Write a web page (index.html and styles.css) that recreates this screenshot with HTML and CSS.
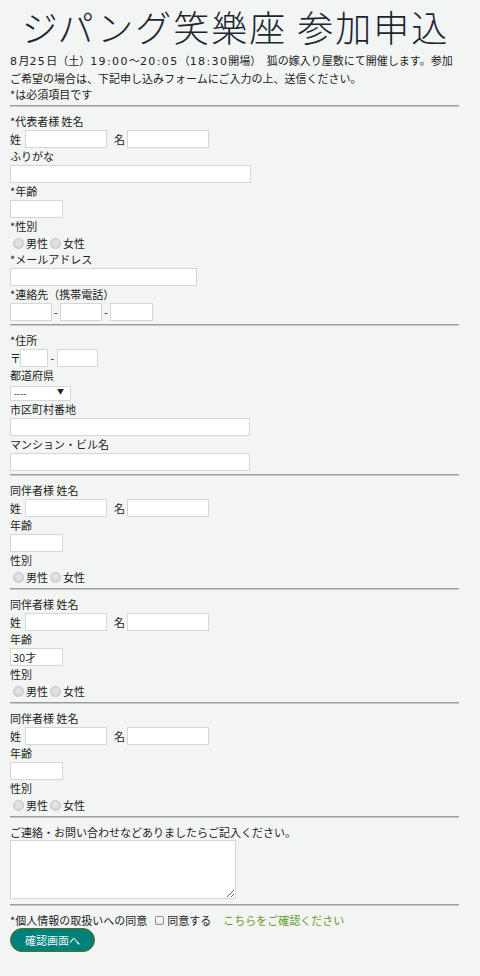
FILE: index.html
```html
<!DOCTYPE html>
<html lang="ja">
<head>
<meta charset="utf-8">
<title>ジパング笑樂座 参加申込</title>
<link rel="stylesheet" href="styles.css">
</head>
<body>
<div class="page">
  <h1 class="title">ジパング笑樂座 参加申込</h1>
  <p class="intro"><span class="num">8</span>月<span class="num">25</span>日（土）<span class="num">19:00</span>〜<span class="num">20:05</span>（<span class="num">18:30</span>開場）　狐の嫁入り屋敷にて開催します。参加<span>ご希望の場合は、下記申し込みフォームにご入力の上、送信ください。</span><br>*は必須項目です</p>
  <form class="form">
    <hr class="rule">
    <div class="group">
      <div class="label">*代表者様 姓名</div>
      <div class="row"><span class="pre">姓</span><input class="field w82" type="text"><span class="mid">名</span><input class="field w82" type="text"></div>
      <div class="label">ふりがな</div>
      <div class="row"><input class="field w241" type="text"></div>
      <div class="label">*年齢</div>
      <div class="row"><input class="field w53" type="text"></div>
      <div class="label">*性別</div>
      <div class="radios"><input class="radio" type="radio" name="g0"><span>男性</span><input class="radio" type="radio" name="g0"><span>女性</span></div>
      <div class="label">*メールアドレス</div>
      <div class="row"><input class="field w187" type="text"></div>
      <div class="label">*連絡先（携帯電話）</div>
      <div class="row"><input class="field w42" type="text"><span class="dash">-</span><input class="field w42" type="text"><span class="dash">-</span><input class="field w43" type="text"></div>
    </div>
    <hr class="rule">
    <div class="group">
      <div class="label">*住所</div>
      <div class="row"><span class="zipmark">〒</span><input class="field w28" type="text"><span class="dash zipdash">-</span><input class="field w41" type="text"></div>
      <div class="label">都道府県</div>
      <div class="row selrow"><span class="selwrap"><select class="pref"><option>----</option></select><span class="arrow">▼</span></span></div>
      <div class="label">市区町村番地</div>
      <div class="row"><input class="field w240" type="text"></div>
      <div class="label">マンション・ビル名</div>
      <div class="row"><input class="field w240" type="text"></div>
    </div>
    <hr class="rule">
    <div class="group">
      <div class="label">同伴者様 姓名</div>
      <div class="row"><span class="pre">姓</span><input class="field w82" type="text"><span class="mid">名</span><input class="field w82" type="text"></div>
      <div class="label">年齢</div>
      <div class="row"><input class="field w53" type="text"></div>
      <div class="label">性別</div>
      <div class="radios"><input class="radio" type="radio" name="g1"><span>男性</span><input class="radio" type="radio" name="g1"><span>女性</span></div>
    </div>
    <hr class="rule">
    <div class="group">
      <div class="label">同伴者様 姓名</div>
      <div class="row"><span class="pre">姓</span><input class="field w82" type="text"><span class="mid">名</span><input class="field w82" type="text"></div>
      <div class="label">年齢</div>
      <div class="row"><input class="field w53" type="text" value="30才"></div>
      <div class="label">性別</div>
      <div class="radios"><input class="radio" type="radio" name="g2"><span>男性</span><input class="radio" type="radio" name="g2"><span>女性</span></div>
    </div>
    <hr class="rule">
    <div class="group">
      <div class="label">同伴者様 姓名</div>
      <div class="row"><span class="pre">姓</span><input class="field w82" type="text"><span class="mid">名</span><input class="field w82" type="text"></div>
      <div class="label">年齢</div>
      <div class="row"><input class="field w53" type="text"></div>
      <div class="label">性別</div>
      <div class="radios"><input class="radio" type="radio" name="g3"><span>男性</span><input class="radio" type="radio" name="g3"><span>女性</span></div>
    </div>
    <hr class="rule">
    <div class="group">
      <div class="label label-tight">ご連絡・お問い合わせなどありましたらご記入ください。</div>
      <textarea class="memo"></textarea>
    </div>
    <hr class="rule">
    <div class="group">
      <div class="agree"><span>*個人情報の取扱いへの同意</span><input class="check" type="checkbox"><span>同意する</span><a class="link" href="#">こちらをご確認ください</a></div>
      <button class="submit" type="button">確認画面へ</button>
    </div>
  </form>
</div>
</body>
</html>
```
FILE: styles.css
```css
html, body {
  margin: 0;
  padding: 0;
  background: #f3f5f4;
}
body {
  font-family: "Noto Sans CJK JP", "Noto Sans", sans-serif;
  font-size: 11px;
  color: #222;
}
.page {
  width: 449px;
  margin-left: 10px;
  padding-bottom: 20px;
}
.title {
  margin: 0;
  padding-left: 2px;
  font-size: 36px;
  line-height: 52px;
  font-weight: 300;
  text-align: center;
  letter-spacing: 2px;
  color: #1b2631;
}
.intro {
  margin: 0;
  line-height: 16px;
}
.num {
  font-family: "DejaVu Sans", sans-serif;
  letter-spacing: 1.4px;
}
.rule {
  height: 0;
  margin: 3px 0 6px;
  border: 0;
  border-top: 1px solid #9c9c9c;
  border-bottom: 1px solid #c9c9c9;
}
.label {
  line-height: 17px;
  height: 17px;
}
.label-tight {
  line-height: 16px;
  height: 16px;
}
.row {
  display: flex;
  align-items: center;
  height: 18px;
}
.selrow {
  height: 17px;
  align-items: flex-start;
}
.field {
  box-sizing: border-box;
  height: 18px;
  margin: 0;
  padding: 0 2px;
  border: 1px solid #d6d6d6;
  border-radius: 0;
  background: #fff;
  font-family: inherit;
  font-size: 11px;
  color: #222;
}
.w82 { width: 82px; }
.w241 { width: 241px; }
.w240 { width: 240px; }
.w53 { width: 53px; }
.w187 { width: 187px; }
.w42 { width: 42px; }
.w43 { width: 43px; }
.w28 { width: 28px; }
.w41 { width: 41px; }
.pre { margin-right: 4px; }
.mid { margin: 0 2px 0 7px; }
.dash { width: 8px; text-align: center; }
.zipmark { width: 10px; }
.zipdash { width: 9px; }
.radios {
  display: flex;
  align-items: center;
  height: 16px;
}
.radio {
  appearance: none;
  -webkit-appearance: none;
  box-sizing: border-box;
  width: 11px;
  height: 11px;
  margin: 0 2px 0 3px;
  border: 1px solid #c4c4c4;
  border-radius: 50%;
  background: radial-gradient(circle at 50% 40%, #e8e8e8 0%, #d0d0d0 100%);
}
.radios span + .radio { margin-left: 2px; }
.selwrap {
  position: relative;
  display: inline-block;
}
.pref {
  appearance: none;
  -webkit-appearance: none;
  box-sizing: border-box;
  width: 61px;
  height: 15px;
  margin: 0;
  padding: 0 0 0 3px;
  border: 1px solid #d6d6d6;
  border-radius: 0;
  background: #fff;
  font-family: inherit;
  font-size: 9px;
  line-height: 13px;
  color: #222;
}
.arrow {
  position: absolute;
  right: 7px;
  top: 1px;
  font-size: 7px;
  line-height: 13px;
  color: #222;
  pointer-events: none;
}
.memo {
  display: block;
  box-sizing: border-box;
  width: 226px;
  height: 59px;
  margin: 0 0 5px;
  border: 1px solid #d6d6d6;
  background: #fff;
}
.agree {
  display: flex;
  align-items: center;
  height: 16px;
}
.check {
  appearance: none;
  -webkit-appearance: none;
  box-sizing: border-box;
  width: 9px;
  height: 9px;
  margin: 0 3px 0 8px;
  border: 1px solid #8c8c8c;
  border-radius: 2px;
  background: linear-gradient(#fff, #e8e8e8);
}
.link {
  margin-left: 12px;
  color: #6a9a2c;
  text-decoration: none;
}
.submit {
  display: block;
  box-sizing: border-box;
  width: 85px;
  height: 24px;
  margin: 0;
  padding: 0;
  border: 1px solid #5f6b1e;
  border-radius: 12px;
  background: #00807a;
  color: #eef6f5;
  font-family: inherit;
  font-size: 11px;
}
```
